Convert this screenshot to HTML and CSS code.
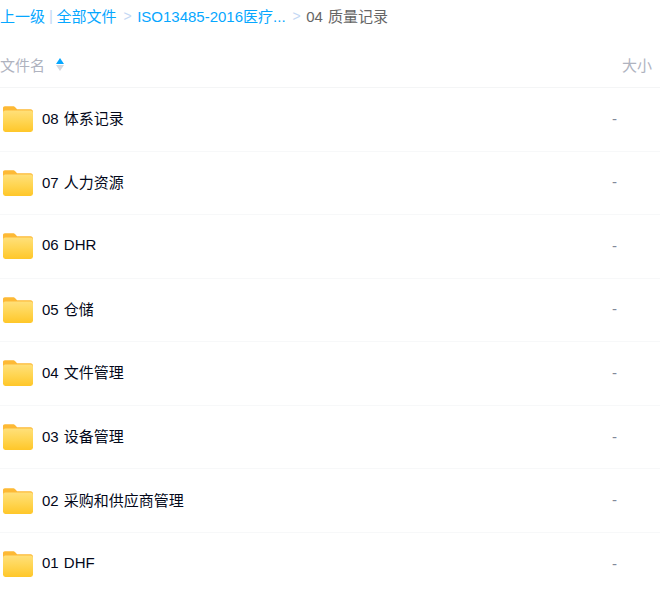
FILE: index.html
```html
<!DOCTYPE html>
<html lang="zh-CN">
<head>
    <meta charset="UTF-8">
    <meta name="viewport" content="width=device-width, initial-scale=1.0">
    <title>文件列表</title>
    <link rel="stylesheet" href="styles.css">
</head>
<body>
    <svg class="defs" width="0" height="0">
        <defs>
            <linearGradient id="folder-front" x1="0" y1="0" x2="0" y2="1">
                <stop offset="0" stop-color="#ffe07a"/>
                <stop offset="0.5" stop-color="#ffd552"/>
                <stop offset="1" stop-color="#ffc729"/>
            </linearGradient>
            <symbol id="folder" viewBox="0 0 32 28">
                <path d="M2 0.5h8.5c1.2 0 2 .5 2.8 1.3l1.700 1.700h14.500c1.400 0 2.500 1 2.500 2.500v6H0V2.500C0 1.300 .8 .5 2 .5z" fill="#fdb935"/>
                <rect x="0" y="4.800" width="32" height="23" rx="2.500" fill="url(#folder-front)"/>
            </symbol>
        </defs>
    </svg>

    <div class="crumbs">
        <a class="link">上一级</a>
        <span class="bar">|</span>
        <a class="link">全部文件</a>
        <span class="sep">&gt;</span>
        <a class="link">ISO13485-2016医疗...</a>
        <span class="sep">&gt;</span>
        <span class="current">04 质量记录</span>
    </div>

    <div class="head">
        <div class="head-name">
            <span>文件名</span>
            <span class="sort">
                <i class="up"></i>
                <i class="down"></i>
            </span>
        </div>
        <span class="head-size">大小</span>
    </div>

    <ul class="files">
        <li class="row"><svg class="icon"><use href="#folder"/></svg><span class="name">08 体系记录</span><span class="size">-</span></li>
        <li class="row"><svg class="icon"><use href="#folder"/></svg><span class="name">07 人力资源</span><span class="size">-</span></li>
        <li class="row"><svg class="icon"><use href="#folder"/></svg><span class="name">06 DHR</span><span class="size">-</span></li>
        <li class="row"><svg class="icon"><use href="#folder"/></svg><span class="name">05 仓储</span><span class="size">-</span></li>
        <li class="row"><svg class="icon"><use href="#folder"/></svg><span class="name">04 文件管理</span><span class="size">-</span></li>
        <li class="row"><svg class="icon"><use href="#folder"/></svg><span class="name">03 设备管理</span><span class="size">-</span></li>
        <li class="row"><svg class="icon"><use href="#folder"/></svg><span class="name">02 采购和供应商管理</span><span class="size">-</span></li>
        <li class="row"><svg class="icon"><use href="#folder"/></svg><span class="name">01 DHF</span><span class="size">-</span></li>
    </ul>
</body>
</html>
```

FILE: styles.css
```css
html, body {
    margin: 0;
    height: 100%;
    overflow: hidden;
}
body {
    background-color: #fff;
    font-family: "Liberation Sans", Arial, "Noto Sans CJK SC", sans-serif;
    font-size: 15px;
    word-spacing: 1px;
}
.defs {
    display: block;
}
.crumbs {
    display: flex;
    align-items: center;
    height: 31px;
    white-space: nowrap;
    color: #06a7ff;
}
.link {
    color: #06a7ff;
}
.bar {
    margin: 0 3.500px 0 4px;
    color: #c4d8f4;
}
.sep {
    margin: 0 5.500px 0 7px;
    color: #c4d8f4;
    font-size: 14px;
}
.current {
    color: #666;
}
.head {
    display: flex;
    justify-content: space-between;
    align-items: center;
    height: 46px;
    padding: 10px 8px 0 0;
    border-bottom: 1px solid #f4f5f6;
    color: #afb3bf;
}
.head-name {
    display: flex;
    align-items: center;
    gap: 11px;
}
.sort {
    display: flex;
    flex-direction: column;
    gap: 1px;
}
.up, .down {
    display: block;
    width: 0;
    height: 0;
    border-left: 4.500px solid transparent;
    border-right: 4.500px solid transparent;
}
.up {
    border-bottom: 6px solid #06a7ff;
}
.down {
    border-top: 6px solid #d4d7de;
}
.files {
    list-style: none;
    margin: 0;
    padding: 0;
}
.row {
    display: flex;
    align-items: center;
    height: 62.550px;
    padding-left: 3px;
    border-bottom: 1px solid #f7f8f9;
    color: #03081a;
}
.row:last-child {
    border-bottom: none;
}
.icon {
    width: 30px;
    height: 28px;
    margin-right: 9px;
}
.name {
    flex: 1;
    margin-bottom: 3px;
}
.size {
    width: 48px;
    margin-bottom: 2px;
    color: #818999;
}
```
